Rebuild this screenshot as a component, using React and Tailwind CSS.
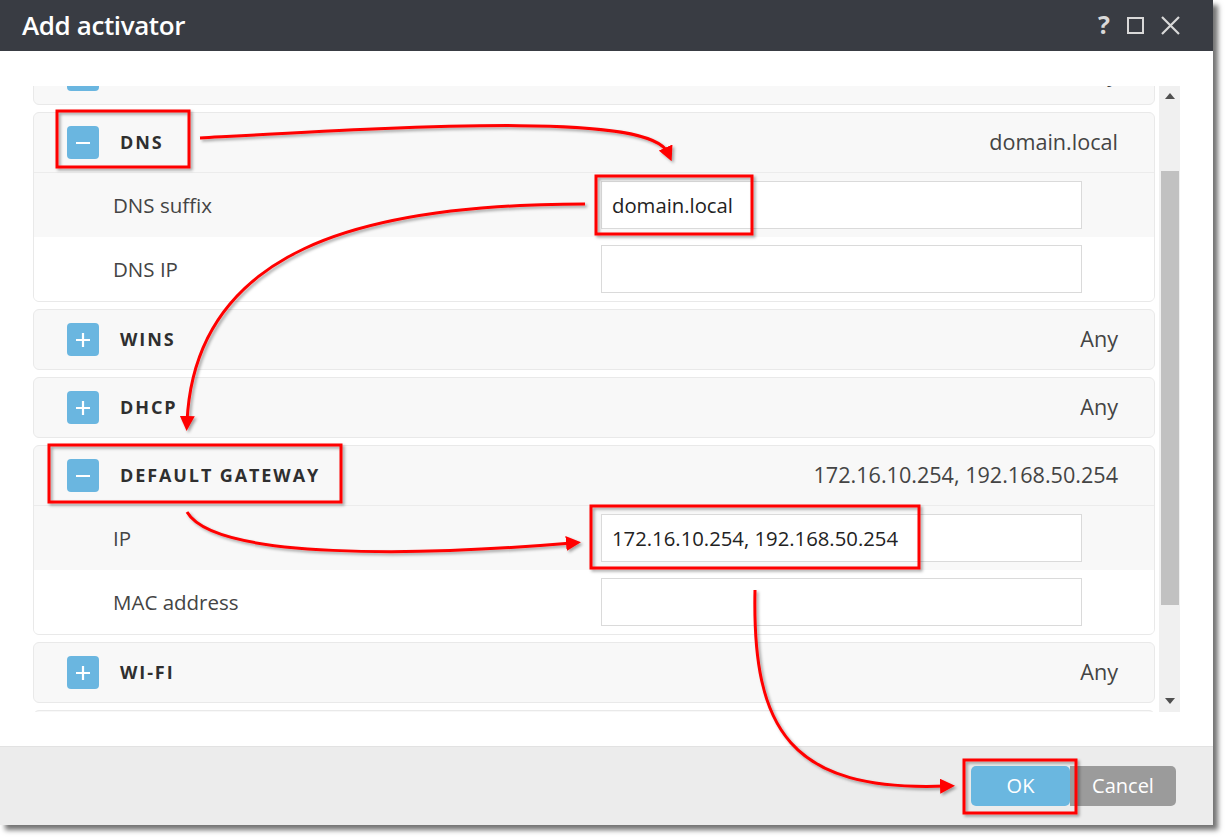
import React from 'react';

const sections = [
  { title: 'LOCATION', value: 'Any' },
  {
    title: 'DNS',
    value: 'domain.local',
    fields: [
      ['DNS suffix', 'domain.local'],
      ['DNS IP', ''],
    ],
  },
  { title: 'WINS', value: 'Any' },
  { title: 'DHCP', value: 'Any' },
  {
    title: 'DEFAULT GATEWAY',
    value: '172.16.10.254, 192.168.50.254',
    fields: [
      ['IP', '172.16.10.254, 192.168.50.254'],
      ['MAC address', ''],
    ],
  },
  { title: 'WI-FI', value: 'Any' },
  { title: 'BLUETOOTH', value: 'Any' },
];

function Toggle({ open }) {
  return (
    <div className="w-[32px] h-[33px] rounded-[4px] bg-[#6ab6e0] flex items-center justify-center shrink-0">
      <svg width="16" height="16" viewBox="0 0 16 16">
        <path d="M1 8h14" stroke="white" strokeWidth="2.2" />
        {!open && <path d="M8 1v14" stroke="white" strokeWidth="2.2" />}
      </svg>
    </div>
  );
}

function Section({ title, value, fields }) {
  const open = !!fields;
  return (
    <div className="border border-[#e9e9e9] rounded-[6px] bg-[#f8f8f8] overflow-hidden shrink-0">
      <div className="h-[59px] flex items-center pl-[33px] pr-[36px]">
        <Toggle open={open} />
        <span className="ml-[21px] text-[18px] font-bold tracking-[1.9px] text-[#2f2f2f]">
          {title}
        </span>
        <span className="ml-auto text-[21.6px] text-[#444]">{value}</span>
      </div>
      {open && (
        <div className="border-t border-[#ececec]">
          {fields.map(([label, val], i) => (
            <div
              key={label}
              className={`h-[64px] flex items-center pl-[79px] ${
                i === 0 ? 'bg-[#f8f8f8]' : 'bg-white'
              }`}
            >
              <span className="w-[488px] text-[20.5px] text-[#444]">{label}</span>
              <div className="w-[481px] h-[48px] border border-[#dadada] bg-white flex items-center px-[10px] text-[20.3px] text-[#222]">
                {val}
              </div>
            </div>
          ))}
        </div>
      )}
    </div>
  );
}

function Annotations() {
  return (
    <svg
      className="absolute inset-0 pointer-events-none"
      width="1228"
      height="839"
      viewBox="0 0 1228 839"
    >
      <defs>
        <filter id="sh" x="-10%" y="-10%" width="120%" height="120%">
          <feDropShadow dx="2" dy="2" stdDeviation="1.5" floodColor="#000" floodOpacity="0.35" />
        </filter>
        <marker id="head" markerWidth="5" markerHeight="5" refX="2" refY="2.5" orient="auto" markerUnits="strokeWidth">
          <path d="M0,0 L5,2.5 L0,5 z" fill="#f00" />
        </marker>
      </defs>
      <g filter="url(#sh)" fill="none" stroke="#f00" strokeWidth="3">
        <rect x="57" y="111" width="132" height="56" />
        <rect x="596" y="176" width="156" height="58" />
        <rect x="49" y="445" width="292" height="57" />
        <rect x="591" y="506" width="328" height="62" />
        <rect x="964" y="760" width="112" height="53" />
        <path d="M200 138 C 420 126, 650 112, 668 153" markerEnd="url(#head)" />
        <path d="M585 204 C 360 204, 195 250, 187 422" markerEnd="url(#head)" />
        <path d="M187 512 C 215 560, 420 556, 572 543" markerEnd="url(#head)" />
        <path d="M755 590 C 752 730, 790 792, 946 786" markerEnd="url(#head)" />
      </g>
    </svg>
  );
}

export default function App() {
  return (
    <div className="relative w-[1228px] h-[839px] bg-white overflow-hidden font-['Open_Sans',sans-serif]">
      <div className="w-[1213px] h-[825px] flex flex-col shadow-[5px_5px_5px_rgba(0,0,0,0.55)]">
        <div className="h-[51px] bg-[#393c43] flex items-center pl-[22px] pr-[33px] shrink-0">
          <span className="text-white text-[26px] font-semibold tracking-[-0.4px]">
            Add activator
          </span>
          <div className="ml-auto flex items-center gap-[17px] text-[#d9d9d9]">
            <span className="text-[25px] font-bold leading-none -mt-[2px]">?</span>
            <svg width="17" height="17" viewBox="0 0 17 17">
              <rect x="1" y="1" width="15" height="15" fill="none" stroke="#d9d9d9" strokeWidth="2" />
            </svg>
            <svg width="19" height="19" viewBox="0 0 19 19">
              <path d="M1 1 L18 18 M18 1 L1 18" stroke="#d9d9d9" strokeWidth="2.2" />
            </svg>
          </div>
        </div>

        <div className="flex-1 bg-white pt-[35px] pl-[33px] flex">
          <div className="w-[1122px] h-[626px] overflow-hidden">
            <div className="-mt-[42px] flex flex-col gap-[7px]">
              {sections.map((s) => (
                <Section key={s.title} {...s} />
              ))}
            </div>
          </div>
          <div className="ml-[4px] w-[21px] h-[626px] bg-[#f0f0f0] flex flex-col items-center">
            <svg width="10" height="6" viewBox="0 0 10 6" className="mt-[7px]">
              <path d="M0 6 L5 0 L10 6 z" fill="#505050" />
            </svg>
            <div className="mt-[72px] w-[18px] h-[434px] bg-[#c1c1c1]" />
            <svg width="10" height="6" viewBox="0 0 10 6" className="mt-auto mb-[8px]">
              <path d="M0 0 L5 6 L10 0 z" fill="#505050" />
            </svg>
          </div>
        </div>

        <div className="h-[79px] bg-[#ececec] border-t border-[#e2e2e2] flex items-center justify-end pr-[37px] shrink-0">
          <button className="w-[99px] h-[40px] rounded-[5px] bg-[#6ab7e0] text-white text-[20px]">
            OK
          </button>
          <button className="w-[106px] h-[40px] rounded-r-[5px] bg-[#9b9b9b] text-white text-[20px]">
            Cancel
          </button>
        </div>
      </div>
      <Annotations />
    </div>
  );
}
